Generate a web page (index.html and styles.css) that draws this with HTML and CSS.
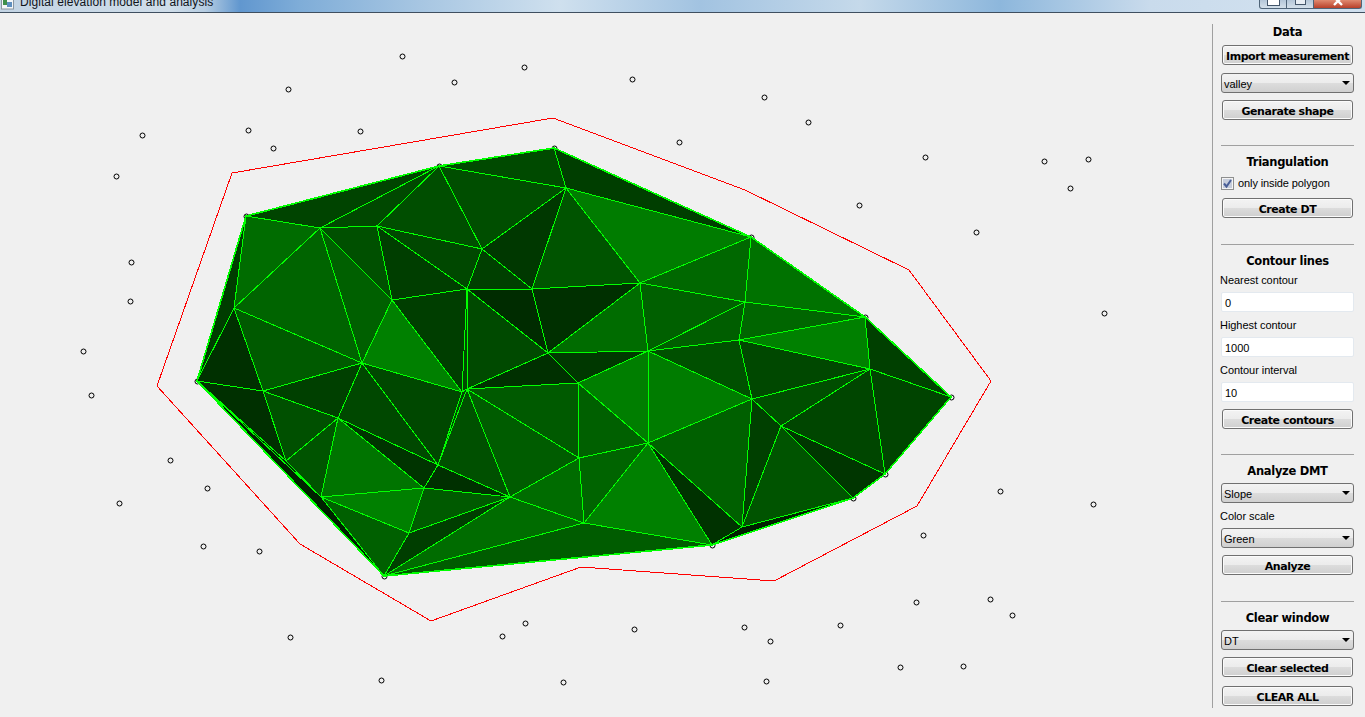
FILE: index.html
```html
<!DOCTYPE html>
<html lang="en">
<head>
  <meta charset="UTF-8" />
  <title>Digital elevation model and analysis</title>
  <link rel="stylesheet" href="styles.css">
</head>
<body>
  <div class="titlebar">
    <svg class="appicon" width="13" height="12" viewBox="0 0 13 12">
      <rect x="0.5" y="-3" width="12" height="12" class="appicon-frame"/>
      <rect x="2" y="0" width="4" height="5" class="appicon-a"/>
      <rect x="6" y="2" width="5" height="5" class="appicon-b"/>
    </svg>
    <span class="titletext">Digital elevation model and analysis</span>
    <div class="winbtns">
      <div class="winbtn"><span class="glyph-min"></span></div>
      <div class="winbtn"><span class="glyph-max"></span></div>
      <div class="winbtn winclose">
        <svg width="12" height="7" viewBox="0 0 12 7"><path d="M2 -3 L10 5 M10 -3 L2 5" class="glyph-x"/></svg>
      </div>
    </div>
  </div>

  <div class="main">
    <div class="canvas">
      <svg class="plot" width="1212" height="704" viewBox="0 13 1212 704">
        <!-- measured points -->
        <g class="pts">
          <circle cx="402" cy="56" r="2.5"/><circle cx="454" cy="82" r="2.5"/><circle cx="524" cy="67" r="2.5"/>
          <circle cx="632" cy="79" r="2.5"/><circle cx="288" cy="89" r="2.5"/><circle cx="764" cy="97" r="2.5"/>
          <circle cx="808" cy="122" r="2.5"/><circle cx="248" cy="130" r="2.5"/><circle cx="360" cy="131" r="2.5"/>
          <circle cx="142" cy="135" r="2.5"/><circle cx="679" cy="142" r="2.5"/><circle cx="273" cy="148" r="2.5"/>
          <circle cx="116" cy="176" r="2.5"/><circle cx="925" cy="157" r="2.5"/><circle cx="1044" cy="161" r="2.5"/>
          <circle cx="1088" cy="159" r="2.5"/><circle cx="1070" cy="188" r="2.5"/><circle cx="859" cy="205" r="2.5"/>
          <circle cx="976" cy="232" r="2.5"/><circle cx="131" cy="262" r="2.5"/><circle cx="130" cy="301" r="2.5"/>
          <circle cx="1104" cy="313" r="2.5"/><circle cx="83" cy="351" r="2.5"/><circle cx="91" cy="395" r="2.5"/>
          <circle cx="170" cy="460" r="2.5"/><circle cx="207" cy="488" r="2.5"/><circle cx="119" cy="503" r="2.5"/>
          <circle cx="203" cy="546" r="2.5"/><circle cx="259" cy="551" r="2.5"/><circle cx="1000" cy="491" r="2.5"/>
          <circle cx="1093" cy="504" r="2.5"/><circle cx="923" cy="535" r="2.5"/><circle cx="916" cy="602" r="2.5"/>
          <circle cx="990" cy="599" r="2.5"/><circle cx="1012" cy="615" r="2.5"/><circle cx="290" cy="637" r="2.5"/>
          <circle cx="502" cy="636" r="2.5"/><circle cx="525" cy="623" r="2.5"/><circle cx="634" cy="629" r="2.5"/>
          <circle cx="744" cy="627" r="2.5"/><circle cx="770" cy="641" r="2.5"/><circle cx="840" cy="625" r="2.5"/>
          <circle cx="900" cy="667" r="2.5"/><circle cx="963" cy="666" r="2.5"/><circle cx="381" cy="680" r="2.5"/>
          <circle cx="563" cy="682" r="2.5"/><circle cx="766" cy="681" r="2.5"/>
          <!-- hull points, mostly covered by the triangles -->
          <circle cx="246" cy="216" r="2.5"/><circle cx="439" cy="166" r="2.5"/><circle cx="554" cy="148" r="2.5"/>
          <circle cx="751" cy="237" r="2.5"/><circle cx="865" cy="317" r="2.5"/><circle cx="951" cy="397" r="2.5"/>
          <circle cx="885" cy="474" r="2.5"/><circle cx="853" cy="498" r="2.5"/><circle cx="712" cy="545" r="2.5"/>
          <circle cx="384" cy="576" r="2.5"/><circle cx="197" cy="381" r="2.5"/>
        </g>

        <polygon class="shape" points="232,173 553,118 745,190 909,270 991,381 917,506 774,581 581,567 431,621 300,544 157,386"/>

        <!-- triangulation, coloured by slope -->
        <g class="tin">
          <polygon class="g44" points="246,216 439,166 320,228"/>
          <polygon class="g48" points="439,166 320,228 377,226"/>
          <polygon class="g4e" points="439,166 377,226 482,249"/>
          <polygon class="g4a" points="439,166 554,148 566,188"/>
          <polygon class="g4e" points="439,166 566,188 482,249"/>
          <polygon class="g3e" points="554,148 566,188 751,237"/>
          <polygon class="g7c" points="566,188 751,237 640,283"/>
          <polygon class="g54" points="566,188 532,289 640,283"/>
          <polygon class="g38" points="566,188 482,249 532,289"/>
          <polygon class="g40" points="482,249 467,289 532,289"/>
          <polygon class="g2c" points="467,289 532,289 548,353"/>
          <polygon class="g30" points="532,289 640,283 548,353"/>
          <polygon class="g6c" points="640,283 548,353 648,351"/>
          <polygon class="g68" points="640,283 751,237 745,302"/>
          <polygon class="g60" points="640,283 648,351 745,302"/>
          <polygon class="g5e" points="648,351 745,302 739,340"/>
          <polygon class="g72" points="751,237 865,317 745,302"/>
          <polygon class="g66" points="745,302 739,340 865,317"/>
          <polygon class="g80" points="739,340 865,317 870,369"/>
          <polygon class="g40" points="865,317 951,397 870,369"/>
          <polygon class="g44" points="870,369 951,397 885,474"/>
          <polygon class="g46" points="781,426 870,369 885,474"/>
          <polygon class="g4e" points="752,399 870,369 781,426"/>
          <polygon class="g48" points="739,340 870,369 752,399"/>
          <polygon class="g50" points="648,351 739,340 752,399"/>
          <polygon class="g38" points="548,353 648,351 578,383"/>
          <polygon class="g7e" points="578,383 648,351 648,443"/>
          <polygon class="g7c" points="648,351 752,399 648,443"/>
          <polygon class="g60" points="648,443 752,399 742,527"/>
          <polygon class="g32" points="648,443 712,545 742,527"/>
          <polygon class="g40" points="752,399 781,426 742,527"/>
          <polygon class="g54" points="781,426 742,527 853,498"/>
          <polygon class="g36" points="781,426 853,498 885,474"/>
          <polygon class="g20" points="712,545 742,527 853,498"/>
          <polygon class="g80" points="648,443 584,523 712,545"/>
          <polygon class="g64" points="579,458 648,443 584,523"/>
          <polygon class="g60" points="578,383 579,458 648,443"/>
          <polygon class="g6c" points="510,497 579,458 584,523"/>
          <polygon class="g5c" points="467,389 579,458 510,497"/>
          <polygon class="g5a" points="467,389 578,383 579,458"/>
          <polygon class="g30" points="467,389 548,353 578,383"/>
          <polygon class="g3e" points="384,576 409,533 510,497"/>
          <polygon class="g6c" points="384,576 510,497 584,523"/>
          <polygon class="g5c" points="384,576 584,523 712,545"/>
          <polygon class="g5a" points="409,533 424,488 510,497"/>
          <polygon class="g30" points="438,465 424,488 510,497"/>
          <polygon class="g34" points="338,418 438,465 424,488"/>
          <polygon class="g48" points="362,363 338,418 438,465"/>
          <polygon class="g40" points="263,391 362,363 338,418"/>
          <polygon class="g30" points="197,381 234,308 263,391"/>
          <polygon class="g5a" points="234,308 362,363 263,391"/>
          <polygon class="g64" points="234,308 320,228 362,363"/>
          <polygon class="g60" points="320,228 392,300 362,363"/>
          <polygon class="g6c" points="246,216 320,228 234,308"/>
          <polygon class="g3c" points="246,216 234,308 197,381"/>
          <polygon class="g50" points="320,228 377,226 392,300"/>
          <polygon class="g3e" points="377,226 392,300 467,289"/>
          <polygon class="g48" points="377,226 482,249 467,289"/>
          <polygon class="g80" points="392,300 362,363 462,392"/>
          <polygon class="g3e" points="392,300 467,289 462,392"/>
          <polygon class="g4a" points="467,289 548,353 467,389"/>
          <polygon class="g48" points="362,363 438,465 462,392"/>
          <polygon class="g48" points="467,289 467,389 462,392"/>
          <polygon class="g48" points="462,392 467,389 438,465"/>
          <polygon class="g50" points="467,389 438,465 510,497"/>
          <polygon class="g50" points="263,391 338,418 286,461"/>
          <polygon class="g30" points="197,381 263,391 286,461"/>
          <polygon class="g54" points="286,461 338,418 321,497"/>
          <polygon class="g74" points="338,418 424,488 321,497"/>
          <polygon class="g80" points="321,497 424,488 409,533"/>
          <polygon class="g60" points="321,497 409,533 384,576"/>
          <polygon class="g2c" points="197,381 286,461 321,497"/>
          <polygon class="g20" points="197,381 321,497 384,576"/>
        </g>
        <polygon class="hull" points="246,216 439,166 554,148 751,237 865,317 951,397 885,474 853,498 712,545 384,576 197,381"/>
      </svg>
    </div>

    <div class="panel">
      <div class="group first">
        <div class="title">Data</div>
        <button class="btn">Import measurement</button>
        <div class="combo">valley<span class="arrow"></span></div>
        <button class="btn">Genarate shape</button>
      </div>

      <div class="group">
        <div class="title">Triangulation</div>
        <div class="check">
          <svg class="checkbox" width="13" height="13" viewBox="0 0 13 13">
            <rect x="0.5" y="0.5" width="12" height="12" class="checkbox-box"/>
            <rect x="2" y="2" width="9" height="9" class="checkbox-fill"/>
            <path d="M3 6.5 L5.5 9.5 L10 3" class="checkbox-tick"/>
          </svg>
          <span>only inside polygon</span>
        </div>
        <button class="btn">Create DT</button>
      </div>

      <div class="group wide">
        <div class="title">Contour lines</div>
        <div class="label">Nearest contour</div>
        <div class="input">0</div>
        <div class="label">Highest contour</div>
        <div class="input">1000</div>
        <div class="label">Contour interval</div>
        <div class="input">10</div>
        <button class="btn">Create contours</button>
      </div>

      <div class="group">
        <div class="title">Analyze DMT</div>
        <div class="combo">Slope<span class="arrow"></span></div>
        <div class="label">Color scale</div>
        <div class="combo">Green<span class="arrow"></span></div>
        <button class="btn">Analyze</button>
      </div>

      <div class="group wide">
        <div class="title">Clear window</div>
        <div class="combo">DT<span class="arrow"></span></div>
        <button class="btn">Clear selected</button>
        <button class="btn btn-last">CLEAR ALL</button>
      </div>
    </div>
  </div>
</body>
</html>
```

FILE: styles.css
```css
body {
  margin: 0;
  background: #f0f0f0;
  overflow: hidden;
  font-family: "Liberation Sans", Arial, sans-serif;
  font-size: 11px;
  color: #000;
}

/* window title bar, cut off by the top of the screen */
.titlebar {
  height: 12px;
  display: flex;
  overflow: hidden;
  border-bottom: 1px solid #3f4f60;
  background: linear-gradient(90deg, #c3d4e4 0, #cfdde9 170px, #b6cde2 205px, #6197cf 240px, #7fadd8 300px, #a7c6e2 420px, #cfe0ee 560px, #a2c3e1 700px, #c5d9ea 860px, #8db7dc 1000px, #c9dbec 1150px, #cfdfee 1260px);
}
.appicon { flex: none; margin-left: 1px; }
.appicon-frame { fill: #f4f6f8; stroke: #8a96a0; }
.appicon-a { fill: #3f8f4a; }
.appicon-b { fill: #5f8fbf; }
.titletext {
  margin: -6px 0 0 6px;
  font-size: 12px;
  line-height: 16px;
  letter-spacing: 0.07px;
  color: #10141a;
  white-space: nowrap;
}
.winbtns { display: flex; margin-left: auto; margin-right: 3px; height: 8px; }
.winbtn {
  width: 26px;
  height: 8px;
  border: 1px solid #4f6478;
  border-top: none;
  border-left-width: 0;
  background: linear-gradient(#b4c6d8, #d4e0ea);
  display: flex;
  justify-content: center;
  overflow: hidden;
}
.winbtn:first-child { border-left-width: 1px; border-radius: 0 0 0 3px; }
.winclose {
  width: 47px;
  background: linear-gradient(#e08a70, #b8402a);
  border-radius: 0 0 3px 0;
}
.glyph-min { width: 11px; height: 5px; background: #fff; border: 1px solid #44566a; border-top: none; }
.glyph-max { width: 9px; height: 4px; background: #e8eef4; border: 1px solid #44566a; border-top: none; }
.glyph-x { fill: none; stroke: #fff; stroke-width: 2.4; }

.main { display: flex; }
.canvas { width: 1212px; flex: none; height: 704px; overflow: hidden; }
.plot { display: block; }

.pts { transform: translate(0.5px, 0.5px); }
.pts circle { fill: none; stroke: #000; stroke-width: 1; }
.shape { fill: none; stroke: #ff0000; stroke-width: 1; shape-rendering: crispEdges; }
.tin polygon { stroke: #00ff00; stroke-width: 1; shape-rendering: crispEdges; }
.hull { fill: none; stroke: #00ff00; stroke-width: 1.6; shape-rendering: crispEdges; }

.g20 { fill: #002000; }
.g2c { fill: #002c00; }
.g30 { fill: #003000; }
.g32 { fill: #003200; }
.g34 { fill: #003400; }
.g36 { fill: #003600; }
.g38 { fill: #003800; }
.g3c { fill: #003c00; }
.g3e { fill: #003e00; }
.g40 { fill: #004000; }
.g44 { fill: #004400; }
.g46 { fill: #004600; }
.g48 { fill: #004800; }
.g4a { fill: #004a00; }
.g4e { fill: #004e00; }
.g50 { fill: #005000; }
.g54 { fill: #005400; }
.g5a { fill: #005a00; }
.g5c { fill: #005c00; }
.g5e { fill: #005e00; }
.g60 { fill: #006000; }
.g64 { fill: #006400; }
.g66 { fill: #006600; }
.g68 { fill: #006800; }
.g6c { fill: #006c00; }
.g72 { fill: #007200; }
.g74 { fill: #007400; }
.g7c { fill: #007c00; }
.g7e { fill: #007e00; }
.g80 { fill: #008000; }

/* right control column */
.panel {
  width: 133px;
  height: 684px;
  margin-top: 11px;
  padding: 0 11px 0 8px;
  border-left: 1px solid #a0a0a0;
  display: flex;
  flex-direction: column;
}
.group {
  display: flex;
  flex-direction: column;
  margin-top: 25px;
  padding-top: 8px;
  border-top: 1px solid #a0a0a0;
}
.group.wide { margin-top: 26px; }
.group.first { margin-top: 0; padding-top: 0; border-top: none; }

.title {
  height: 15px;
  line-height: 17px;
  text-align: center;
  font-family: "DejaVu Sans", sans-serif;
  font-size: 11.5px;
  font-weight: bold;
  letter-spacing: -0.3px;
  color: #000;
}
.label {
  height: 14px;
  line-height: 14px;
  margin-top: 6px;
  margin-left: -1px;
  font-size: 11px;
  letter-spacing: -0.05px;
}
.title + .label { margin-top: 5px; }

.btn {
  display: block;
  box-sizing: border-box;
  width: 131px;
  height: 20px;
  margin: 7px 1px 0;
  padding: 2px 0 0;
  border: 1px solid #707070;
  border-radius: 3px;
  background: linear-gradient(#f3f3f3 0, #ececec 48%, #dcdcdc 52%, #cfcfcf 100%);
  box-shadow: inset 0 0 0 1px #fbfbfb;
  font-family: "DejaVu Sans", sans-serif;
  font-size: 11px;
  font-weight: bold;
  letter-spacing: -0.45px;
  color: #000;
}
.title + .btn { margin-top: 6px; }
.btn-last { margin-top: 9px; }

.combo {
  box-sizing: border-box;
  height: 20px;
  margin-top: 7px;
  padding-left: 2px;
  line-height: 21px;
  border: 1px solid #707070;
  border-radius: 3px;
  background: linear-gradient(#f3f3f3 0, #ececec 48%, #dcdcdc 52%, #d0d0d0 100%);
  font-size: 11px;
  position: relative;
}
.btn + .combo { margin-top: 8px; }
.title + .combo { margin-top: 5px; }
.label + .combo { margin-top: 5px; }
.arrow {
  position: absolute;
  right: 3px;
  top: 7px;
  width: 0;
  height: 0;
  border-left: 4px solid transparent;
  border-right: 4px solid transparent;
  border-top: 4px solid #000;
}

.input {
  box-sizing: border-box;
  height: 20px;
  margin-top: 5px;
  padding-left: 3px;
  line-height: 21px;
  background: #fff;
  border: 1px solid #e3e9ef;
  border-radius: 2px;
  font-size: 11px;
}

.check {
  display: flex;
  align-items: center;
  height: 15px;
  margin-top: 7px;
  gap: 4px;
  letter-spacing: -0.1px;
  line-height: 13px;
}
.checkbox { flex: none; }
.checkbox-box { fill: #f4f4f4; stroke: #8e8f8f; }
.checkbox-fill { fill: #c6cddc; }
.checkbox-tick { fill: none; stroke: #4a5f97; stroke-width: 2; }
```
